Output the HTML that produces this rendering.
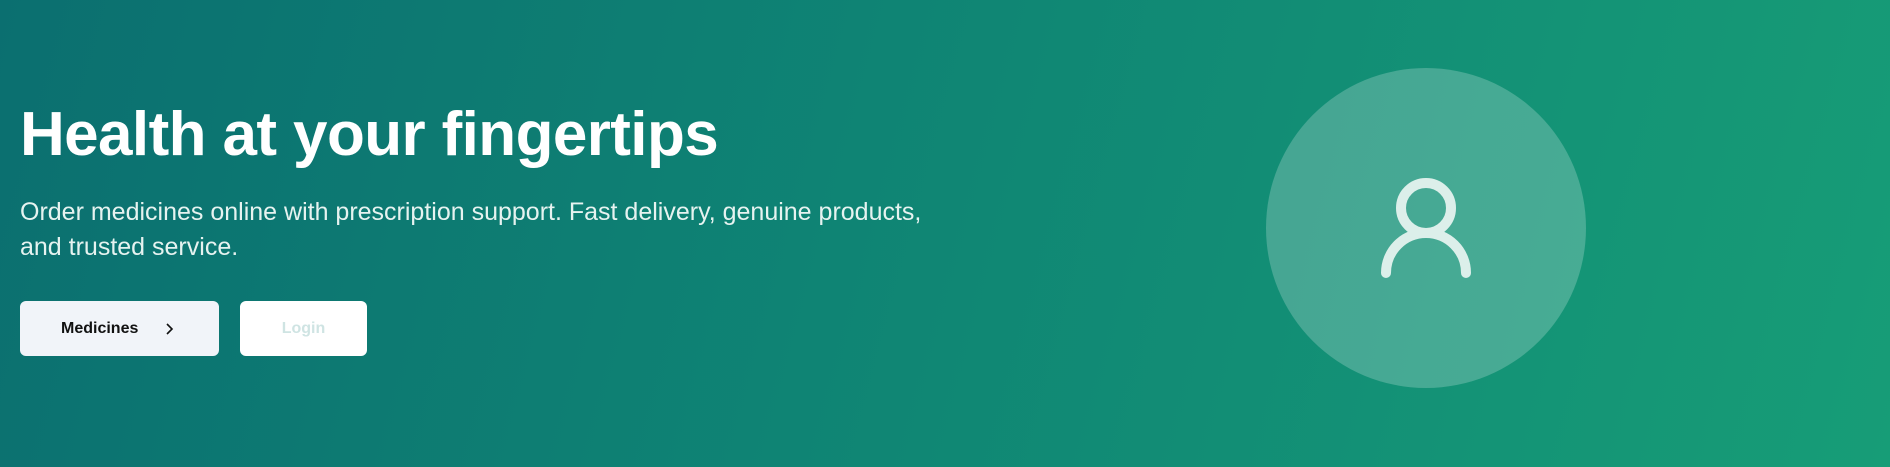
<!DOCTYPE html>
<html><head><style>
html,body{margin:0;padding:0}
body{width:1890px;height:467px;overflow:hidden;position:relative;background:linear-gradient(105deg,#0b6f70 0%,#0f8474 45%,#179d77 100%);font-family:"Liberation Sans",sans-serif}
h1{position:absolute;left:20px;top:99px;margin:0;font-size:62px;line-height:72px;font-weight:bold;color:#fff;letter-spacing:-0.6px;white-space:nowrap}
p{position:absolute;left:20px;top:195px;margin:0;font-size:25px;line-height:35px;color:#e6f3f0;width:940px}
.b{position:absolute;top:301px;height:55px;line-height:55px;border-radius:6px;font-size:16px;font-weight:bold}
.m{left:20px;width:199px;background:#f1f4f9;color:#111}
.m span{position:absolute;left:41px;top:0}
.m svg{position:absolute;left:144px;top:21px}
.l{left:240px;width:127px;background:#fff;color:#cfe4e3;text-align:center}
.c{position:absolute;left:1266px;top:68px;width:320px;height:320px;border-radius:50%;background:rgba(255,255,255,0.22)}
</style></head><body>
<h1>Health at your fingertips</h1>
<p>Order medicines online with prescription support. Fast delivery, genuine products, and trusted service.</p>
<div class="b m"><span>Medicines</span><svg width="12" height="14" viewBox="0 0 12 14"><path d="M3 2l5 5-5 5" fill="none" stroke="#111" stroke-width="1.6"/></svg></div>
<div class="b l">Login</div>
<div class="c"></div>
<svg style="position:absolute;left:0;top:0" width="1890" height="467"><g fill="none" stroke="#dcefea" stroke-width="10" stroke-linecap="round"><circle cx="1426" cy="208" r="25"/><path d="M1386 273a40 40 0 0 1 80 0"/></g></svg>
</body></html>
